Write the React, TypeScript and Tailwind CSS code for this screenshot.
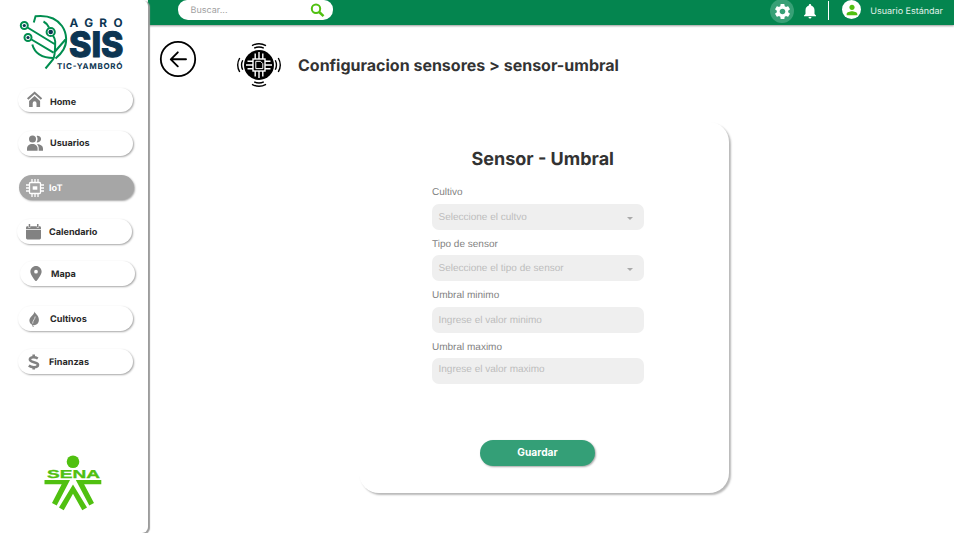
import React from "react";
import { FaLocationDot } from "react-icons/fa6";
import { MdSettings, MdNotifications, MdPerson } from "react-icons/md";

const HomeIcon = () => (
  <svg width="18" height="18" viewBox="26.500 91.500 18 18" fill="none" className="text-[#828282]">
    <path d="M28.200 99.500 35.100 93.300l6.900 6.200" stroke="currentColor" strokeWidth="2.100" />
    <path d="M29.600 101.400 35.100 96.500l5.500 4.900V107.500H37v-3.800a1.900 1.900 0 0 0-3.800 0v3.800h-3.600z" fill="currentColor" />
  </svg>
);

const UsersIcon = () => (
  <svg width="18" height="18" viewBox="26 135 18 18" fill="#828282">
    <circle cx="32.500" cy="139.100" r="3.500" />
    <path d="M27 150.700v-2c0-2.800 2.200-4.600 5.300-4.600s5.300 1.800 5.300 4.600v2z" />
    <path d="M36.600 135.900c2.500-.5 4.500 1 4.500 3.200s-2 3.700-4.500 3.200c1.300-1.900 1.300-4.500 0-6.400zM38.700 150.700v-2.500c0-1.700-.7-3-1.800-4 3.500-.1 6.100 1.600 6.100 4.500v2z" />
  </svg>
);

const ChipIcon = () => (
  <svg width="18" height="18" viewBox="0 0 18 18" fill="none" stroke="#fff" strokeWidth="1.300">
    <rect x="3.500" y="3.500" width="11" height="11" rx="1" />
    <path d="M6 0v3.500M9 0v3.500M12 0v3.500M6 14.500V18M9 14.500V18M12 14.500V18M0 6h3.500M0 9h3.500M0 12h3.500M14.500 6H18M14.500 9H18M14.500 12H18" />
    <rect x="6.700" y="7.300" width="4.600" height="3.400" fill="#fff" stroke="none" />
  </svg>
);

const CalendarIcon = () => (
  <svg width="18" height="18" viewBox="25 222.500 18 18" fill="#828282">
    <path d="M26 229.500h15v8q0 1.400-1.400 1.400H27.400q-1.400 0-1.400-1.400zM26 228.700v-1.500q0-1.400 1.400-1.400h1v1.400h1.900v-1.400h6.500v1.400h1.900v-1.400h.9q1.400 0 1.400 1.400v1.500z" />
    <path d="M28.700 223.500h1.500v3.200h-1.500zM37 223.500h1.500v3.200H37z" />
  </svg>
);

const LeafIcon = () => (
  <svg width="18" height="18" viewBox="25 310 18 18" fill="none">
    <path d="M34.500 311.500c.8 2.500 4.400 3.800 4.400 8.300 0 3.300-2.200 5.300-4.800 5.500-3 0-4.700-2-4.700-4.700 0-4.300 4.600-4.900 5.100-9.100z" fill="#828282" />
    <path d="M35.200 316.500c-.2 3-2.400 3.400-2.700 7.500" stroke="#fff" strokeWidth=".7" />
    <path d="M32.500 323.500c0 1.300.2 2.300.8 3.400" stroke="#828282" strokeWidth="1" />
  </svg>
);

const DollarIcon = () => (
  <svg width="18" height="18" viewBox="25.500 353 18 18" fill="none" stroke="#828282" strokeWidth="2.600">
    <path d="M38.300 358.500c-1.300-.8-2.700-1.200-4.200-1.200-2.300 0-3.700.9-3.700 2.300 0 3.400 8.100 1.700 8.100 5.100 0 1.600-1.500 2.500-4.100 2.500-1.800 0-3.600-.5-5.100-1.500" />
    <path d="M34.200 354.500v3M34.200 366.500v3" />
  </svg>
);

const SearchIcon = () => (
  <svg width="15" height="15" viewBox="310 3 15 15" fill="none" stroke="#50c010">
    <circle cx="316" cy="8.700" r="4.200" strokeWidth="2" />
    <path d="m319.200 12 4.300 4.200" strokeWidth="2.500" />
  </svg>
);

const items = [
  { label: "Home", icon: <HomeIcon />, cls: "mt-[88px] ml-[18px] h-[24px]", pad: "pl-2", gap: "gap-[6px]", y: "pt-[5px]" },
  { label: "Usuarios", icon: <UsersIcon />, cls: "mt-[19px] ml-[18px] h-[25px]", pad: "pl-2", gap: "gap-[6px]", y: "pt-[1px]" },
  { label: "IoT", icon: <ChipIcon />, cls: "mt-[19px] ml-[19px] h-[25px]", pad: "pl-[7px]", gap: "gap-[5px]", y: "pt-[3px]", active: true },
  { label: "Calendario", icon: <CalendarIcon />, cls: "mt-[19px] ml-[17px] h-[25px]", pad: "pl-2", gap: "gap-[6px]", y: "pt-[3px]" },
  { label: "Mapa", icon: <FaLocationDot size={15} color="#828282" className="w-[18px]" />, cls: "mt-[17px] ml-[20px] h-[25px]", pad: "pl-[7px]", gap: "gap-[6px]", y: "pt-[3px]" },
  { label: "Cultivos", icon: <LeafIcon />, cls: "mt-[20px] ml-[18px] h-[25px]", pad: "pl-[7px]", gap: "gap-[7px]", y: "pt-[3px]" },
  { label: "Finanzas", icon: <DollarIcon />, cls: "mt-[18px] ml-[18px] h-[25px]", pad: "pl-[7px]", gap: "gap-[6px]", y: "pt-[3px]" },
];

const AgroLogo = () => (
  <svg className="absolute left-[18px] top-[10px]" width="110" height="64" viewBox="18 10 110 64" fill="none">
    <g stroke="#008d4f" strokeWidth="2">
      <path d="M33.800 22.500 35.500 16.300c12-1.300 21 2 26.500 9.700 5.500 8 5 17.500 1.500 23.500-2 3.700-5 6.500-8 9" />
      <path d="M45.500 68.500 53 59.500c2-3 2.200-9 2.200-18 0-3-2-5.500-3.200-7.500M27.500 27.500 54.500 44M31.500 39.500 53.500 52.700M55 51.500l10.500-12M43.500 21.500c3 1.500 4 3 5.500 6" />
      <path d="M32.300 44.500c2.500 9 10.500 13.500 21.200 13.500" />
      <circle cx="24.300" cy="25.500" r="3.500" fill="#fff" />
      <circle cx="28" cy="37.500" r="3.500" fill="#fff" />
      <circle cx="50.700" cy="32" r="4.100" fill="#fff" />
    </g>
    <g fill="#0c3552">
      <circle cx="24.300" cy="25.500" r="1.600" />
      <circle cx="28" cy="37.500" r="1.600" />
      <circle cx="50.700" cy="32" r="2.300" />
      <g fontFamily="Inter, sans-serif" fontWeight="700">
        <text x="69.500" y="26.800" fontSize="11.800" textLength="53" lengthAdjust="spacing">AGRO</text>
        <text x="69" y="57.300" fontSize="35" fontWeight="800" stroke="#0c3552" strokeWidth="1" textLength="54.500" lengthAdjust="spacingAndGlyphs">SIS</text>
        <text x="57" y="68.700" fontSize="8" textLength="65.500">TIC-YAMBORÓ</text>
      </g>
    </g>
  </svg>
);

const SenaLogo = () => (
  <svg className="ml-[44px] mt-[80px]" width="58" height="57" viewBox="44 454 58 57" fill="#50c010">
    <circle cx="73" cy="461.700" r="6.300" />
    <text x="47" y="477.600" fontFamily="Liberation Sans, sans-serif" fontWeight="700" fontSize="11.500" stroke="#50c010" strokeWidth=".3" textLength="53" lengthAdjust="spacingAndGlyphs">SENA</text>
    <path d="M44.500 480H70l-13.300 25.500-4.700-2.600 9.700-18.700H44.500zM75.800 480h25.500v4.200H84.100l9.900 18.700-4.700 2.600z" />
    <path d="M73 484.500 87 507.500l-4.700 2.800L73 493.700l-9.300 16.600-4.700-2.800z" />
  </svg>
);

const SensorIcon = () => (
  <svg width="46" height="46" viewBox="236 42 46 46" fill="none">
    <circle cx="259" cy="65" r="15" fill="#000" />
    <g stroke="#fff" strokeWidth="1.400">
      <rect x="253" y="59" width="12" height="12" />
      <path d="M255.200 53.500v5.500M259 52V59M262.800 53.500v5.500M255.200 71v5.500M259 71v7M262.800 71v5.500M247.500 61.200h5.500M246 65h7M247.500 68.800h5.500M265 61.200h5.500M265 65h7M265 68.800h5.500" />
      <path d="M255.800 61.300h4.700l2.300 2.300v5h-7z" strokeWidth="1" />
    </g>
    <g stroke="#000" strokeWidth="1.400">
      <path d="M252 45.700q7-4 14 0M254.200 48.200q4.800-2.300 9.600 0M252 84.300q7 4 14 0M254.200 81.800q4.800 2.300 9.600 0M239.700 58q-4 7 0 14M242.700 60.200q-2.300 4.800 0 9.600M278.300 58q4 7 0 14M275.300 60.200q2.300 4.800 0 9.600" />
    </g>
  </svg>
);

function Field({ label, placeholder, select, top }: { label: string; placeholder: string; select?: boolean; top?: boolean }) {
  return (
    <div className="h-[51.500px] text-[#828282]">
      <div className="h-[18.500px] pt-[1px] font-['Liberation_Sans',sans-serif] text-[10px] leading-[13px]">{label}</div>
      <div className={`flex h-[26px] w-[211.500px] items-center justify-between rounded-[7px] bg-[#efefef] pl-[6.500px] pr-[11px] font-['Liberation_Sans',sans-serif] text-[10px] text-[#bdbdbd] ${top ? "pb-[3px]" : "pt-[1px]"}`}>
        <span>{placeholder}</span>
        {select && <svg className="mt-[2px]" width="6" height="3" viewBox="0 0 6 3"><path d="M0 0h6L3 3z" fill="#aaa" /></svg>}
      </div>
    </div>
  );
}

export default function App() {
  return (
    <div className="relative flex h-[533px] w-[954px] overflow-hidden bg-white font-['Inter',sans-serif] [text-rendering:geometricPrecision]">
      <aside className="relative z-10 h-[533px] w-[148px] shrink-0 rounded-r-[6px] bg-white shadow-[2px_1px_1px_#9c9c9c]">
        <AgroLogo />
        <nav className="flex flex-col">
          {items.map((it) => (
            <div key={it.label} className={`flex w-[115px] shrink-0 items-center rounded-[13px] ${it.cls} ${it.pad} ${it.gap} ${it.active ? "bg-[#a6a6a6] text-white" : "bg-white text-[#292929]"} shadow-[1px_1px_2px_rgba(0,0,0,0.35)]`}>
              <span className="flex w-[18px] shrink-0 justify-center">{it.icon}</span>
              <span className={`text-[9.100px] font-bold leading-3 ${it.y}`}>{it.label}</span>
            </div>
          ))}
        </nav>
        <SenaLogo />
      </aside>
      <div className="flex min-w-0 flex-1 flex-col">
        <header className="flex h-[25px] shrink-0 items-start bg-[#04854f] shadow-[0_1px_2px_rgba(0,0,0,0.4)]">
          <div className="ml-[29.500px] flex h-5 w-[155px] items-center justify-between rounded-b-[10px] rounded-t-[9px] bg-white pl-[13px] pr-[7.500px] text-[9px] text-[#a0a0a0]">
            <span className="pt-[2px] tracking-[0.020px]">Buscar...</span>
            <SearchIcon />
          </div>
          <div className="ml-auto flex items-center">
            <div className="-mt-[1px] flex h-6 w-6 items-center justify-center rounded-full bg-[#38a076]"><MdSettings size={19} color="#fff" /></div>
            <MdNotifications size={18} color="#fff" className="-mt-[2px] ml-[7px]" />
            <div className="ml-[9px] -mt-[3px] h-[19px] w-px bg-white" />
            <div className="ml-[13px] -mt-[4px] flex h-[19px] w-[19px] items-center justify-center rounded-full bg-white"><MdPerson size={16} color="#50c010" /></div>
            <span className="ml-[9px] mr-[11px] mt-[1px] whitespace-nowrap text-[9px] tracking-[-0.010px] text-[#e3f2eb]">Usuario Estándar</span>
          </div>
        </header>
        <main className="flex flex-1 flex-col">
          <div className="flex h-[80px] items-center pl-[11px]">
            <svg className="-mt-[12px]" width="38" height="38" viewBox="159 40 38 38" fill="none" stroke="#000">
              <circle cx="178" cy="59" r="17.200" strokeWidth="1.800" />
              <path d="M186 59.300h-15M177.800 52.300l-7 7 7 7" strokeWidth="1.900" strokeLinecap="round" strokeLinejoin="round" />
            </svg>
            <div className="ml-[39px]"><SensorIcon /></div>
            <h1 className="ml-4 text-[16px] font-bold text-[#333]">Configuracion sensores &gt; sensor-umbral</h1>
          </div>
          <section className="ml-[211px] mt-[17px] flex h-[371px] w-[370px] flex-col rounded-[20px] bg-white pl-[73px] shadow-[2px_2px_2px_rgba(0,0,0,0.28)]">
            <h2 className="mt-[26px] ml-[39.500px] text-[18px] font-bold leading-6 text-[#333]">Sensor - Umbral</h2>
            <div className="mt-[13px]">
              <Field label="Cultivo" placeholder="Seleccione el cultvo" select />
              <Field label="Tipo de sensor" placeholder="Seleccione el tipo de sensor" select />
              <Field label="Umbral minimo" placeholder="Ingrese el valor minimo" />
              <Field label="Umbral maximo" placeholder="Ingrese el valor maximo" top />
            </div>
            <button className="ml-[48px] mt-[49px] h-[26px] w-[115px] rounded-[13px] bg-[#349f77] text-[10.200px] font-bold text-white shadow-[1px_1px_2px_rgba(0,0,0,0.35)]">Guardar</button>
          </section>
        </main>
      </div>
    </div>
  );
}
